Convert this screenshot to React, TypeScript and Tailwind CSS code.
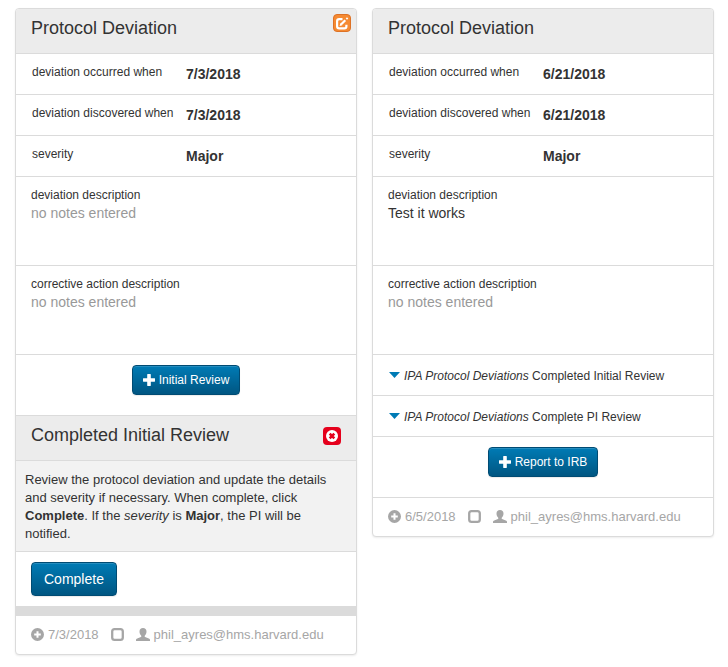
import type { ReactNode } from "react";

function PlusIcon() {
  return (
    <svg viewBox="0 0 12 12" className="size-3 shrink-0" fill="currentColor" aria-hidden="true">
      <path d="M4.600 0h2.800q.4 0 .4.4v3.800h3.800q.4 0 .4.4v2.700q0 .4-.4.4H7.800v3.800q0 .4-.4.4H4.600q-.4 0-.4-.4V7.700H.4q-.4 0-.4-.4V4.600q0-.4.4-.4h3.800V.4q0-.4.4-.4z" />
    </svg>
  );
}

function PlusSignIcon() {
  return (
    <svg viewBox="0 0 13 13" className="size-[13px] shrink-0" aria-hidden="true">
      <path
        fill="currentColor"
        fillRule="evenodd"
        d="M6.5 0a6.5 6.5 0 1 1 0 13a6.5 6.5 0 0 1 0-13zM5.500 3.200v2.300H3.200v2h2.300v2.300h2V7.500h2.300v-2H7.500V3.200z"
      />
    </svg>
  );
}

function UncheckedIcon() {
  return (
    <svg viewBox="0 0 13 13" className="size-[13px] shrink-0" aria-hidden="true">
      <rect x="1.2" y="1.2" width="10.600" height="10.600" rx="2.400" fill="none" stroke="currentColor" strokeWidth="2.300" />
    </svg>
  );
}

function UserIcon() {
  return (
    <svg viewBox="0 0 14 13" className="h-[13px] w-[14px] shrink-0" fill="currentColor" aria-hidden="true">
      <path d="M7 0c2.200 0 3.500 1.300 3.500 3.400c0 1.700-.6 3.100-1.600 4c-.4.500-.3 1.300.2 1.600l3.700 1.400c.8.300 1.200.8 1.200 1.400V13H0v-1.200c0-.6.4-1.100 1.200-1.400L4.900 9c.5-.3.600-1.100.2-1.600c-1-.9-1.600-2.300-1.600-4C3.500 1.300 4.800 0 7 0z" />
    </svg>
  );
}

function EditIcon() {
  return (
    <svg viewBox="0 0 14 13" className="h-[13px] w-[14px]" fill="none" stroke="currentColor" aria-hidden="true">
      <path strokeWidth="2.200" d="M7.500 2.100H4.200Q2.100 2.100 2.100 4.200v5.100Q2.100 11.400 4.200 11.400h5.100Q11.400 11.400 11.400 9.300V7.800" />
      <path strokeWidth="2.200" d="M6 7.500L10.300 3.200" />
      <path strokeWidth="1.800" d="M11.400 2.100L12.600.9" />
      <path fill="currentColor" stroke="none" d="M4.600 8.900l.7-2.700l2 2z" />
    </svg>
  );
}

function RemoveIcon() {
  return (
    <svg viewBox="0 0 12 12" className="size-3" fill="none" stroke="currentColor" aria-hidden="true">
      <circle cx="6" cy="6" r="6" fill="#fff" stroke="none" />
      <path strokeWidth="2.600" d="M3.700 3.700l4.600 4.600M8.300 3.700L3.700 8.300" />
    </svg>
  );
}

const blueButton =
  "inline-flex cursor-pointer items-center justify-center rounded border border-[#004b73] bg-linear-to-b from-[#007bb5] to-[#005682] text-white shadow-[inset_0_1px_0_rgba(255,255,255,0.15),0_1px_1px_rgba(0,0,0,0.08)]";

function SmallButton({ children }: { children: ReactNode }) {
  return (
    <div className="flex h-[61px] items-start justify-center border-b border-[#dbdbdb] pt-2.5">
      <button type="button" className={blueButton + " h-[30px] gap-1 px-2.5 text-[12px]"}>
        <PlusIcon />
        {children}
      </button>
    </div>
  );
}

function PanelHeader({ title, children }: { title: string; children?: ReactNode }) {
  return (
    <header className="flex h-[45px] items-start justify-between border-b border-[#dbdbdb] bg-[#ececec] pt-[9px] pl-[15px]">
      <h2 className="text-[18px] leading-5">{title}</h2>
      {children}
    </header>
  );
}

function Field({ label, value }: { label: string; value: string }) {
  return (
    <div className="flex h-[41px] items-start border-b border-[#dbdbdb] pt-2.5 pl-4">
      <dt className="w-[154px] shrink-0 text-[12px] leading-4">{label}</dt>
      <dd className="text-[14px] leading-5 font-bold">{value}</dd>
    </div>
  );
}

function Notes({ label, text }: { label: string; text?: string }) {
  return (
    <div className="h-[89px] border-b border-[#dbdbdb] px-[15px] pt-2.5">
      <dt className="text-[12px] leading-4">{label}</dt>
      <dd className={text ? "text-[14px] leading-5" : "text-[14px] leading-5 text-[#999]"}>
        {text ?? "no notes entered"}
      </dd>
    </div>
  );
}

function Details({ date, description }: { date: string; description?: string }) {
  return (
    <dl>
      <Field label="deviation occurred when" value={date} />
      <Field label="deviation discovered when" value={date} />
      <Field label="severity" value="Major" />
      <Notes label="deviation description" text={description} />
      <Notes label="corrective action description" />
    </dl>
  );
}

function Step({ name }: { name: string }) {
  return (
    <button
      type="button"
      className="flex h-[41px] w-full cursor-pointer items-center border-b border-[#dbdbdb] pt-0.5 pl-4 text-left text-[12px]"
    >
      <svg viewBox="0 0 11 8" className="mr-1 h-2 w-[11px] shrink-0" aria-hidden="true">
        <path d="M0 0h11L5.500 6z" fill="#007bb5" />
      </svg>
      <span>
        <em>IPA Protocol Deviations</em> {name}
      </span>
    </button>
  );
}

function PanelFooter({ date }: { date: string }) {
  return (
    <footer className="flex h-[38px] items-center px-[15px] text-[13px] text-[#a6a6a6]">
      <span className="pb-0.5">
        <PlusSignIcon />
      </span>
      <span className="ml-1">{date}</span>
      <span className="ml-3 pb-0.5">
        <UncheckedIcon />
      </span>
      <span className="mr-1 ml-3 pb-0.5">
        <UserIcon />
      </span>
      <span>phil_ayres@hms.harvard.edu</span>
    </footer>
  );
}

function Card({ children }: { children: ReactNode }) {
  return (
    <article className="min-w-0 overflow-hidden rounded border border-[#dbdbdb] bg-white shadow-[0_1px_2px_rgba(0,0,0,0.08)]">
      {children}
    </article>
  );
}

export default function App() {
  return (
    <main className="grid min-h-screen grid-cols-2 items-start gap-[15px] bg-white pt-2 pr-3.5 pb-3 pl-[15px] font-['Liberation_Sans',Arial,sans-serif] text-[#333]">
      <Card>
        <PanelHeader title="Protocol Deviation">
          <button
            type="button"
            aria-label="Edit"
            className="-mt-1 mr-[5px] flex size-[18px] cursor-pointer items-center justify-center rounded border border-[#dd7226] bg-[#f58a32] text-white"
          >
            <EditIcon />
          </button>
        </PanelHeader>
        <Details date="7/3/2018" />
        <SmallButton>Initial Review</SmallButton>
        <section>
          <PanelHeader title="Completed Initial Review">
            <button
              type="button"
              aria-label="Close"
              className="mt-0.5 mr-[15px] flex size-[18px] cursor-pointer items-center justify-center rounded bg-[#e5001c] text-[#e5001c]"
            >
              <RemoveIcon />
            </button>
          </PanelHeader>
          <p className="border-b border-[#dbdbdb] bg-[#f2f2f2] px-[9px] pt-2.5 pb-2 text-[13px] leading-[18px]">
            Review the protocol deviation and update the details and severity if necessary. When complete, click{" "}
            <strong>Complete</strong>. If the <em>severity</em> is <strong>Major</strong>, the PI will be notified.
          </p>
          <div className="border-b-10 border-[#dbdbdb] px-[15px] py-2.5">
            <button type="button" className={blueButton + " h-[34px] px-3 text-[14px]"}>
              Complete
            </button>
          </div>
        </section>
        <PanelFooter date="7/3/2018" />
      </Card>
      <Card>
        <PanelHeader title="Protocol Deviation" />
        <Details date="6/21/2018" description="Test it works" />
        <Step name="Completed Initial Review" />
        <Step name="Complete PI Review" />
        <SmallButton>Report to IRB</SmallButton>
        <PanelFooter date="6/5/2018" />
      </Card>
    </main>
  );
}
